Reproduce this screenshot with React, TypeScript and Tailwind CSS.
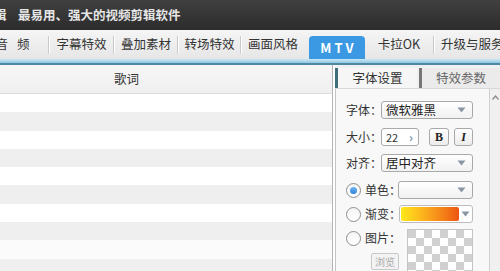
import React from "react";

const cjk = { fontFamily: '"Noto Sans CJK SC", "Noto Sans", sans-serif' };

const Sep = () => (
  <div className="flex h-[18px] w-[2px] shrink-0">
    <div className="w-px bg-[#c9c9c9]" />
    <div className="w-px bg-white" />
  </div>
);

const Arrow = () => (
  <svg width="9" height="6" viewBox="0 0 9 6" className="shrink-0">
    <path d="M0.5 0.5 L8.5 0.5 L4.5 5.5 Z" fill="#8a96a3" />
  </svg>
);

const Select = ({ text, w }: { text: string; w: string }) => (
  <div
    className={`flex h-[18px] ${w} shrink-0 items-center justify-between rounded-[3px] border border-[#a9a9a9] bg-gradient-to-b from-white to-[#f1f1f1] pl-[4px] pr-[6px] text-[12.5px] leading-none text-[#222]`}
  >
    <span className="whitespace-nowrap">{text}</span>
    <Arrow />
  </div>
);

const Radio = ({ on }: { on?: boolean }) => (
  <div className="flex h-[15px] w-[15px] shrink-0 items-center justify-center rounded-full border border-[#8e8e8e] bg-gradient-to-b from-[#f4f4f4] to-white">
    {on && <div className="h-[7px] w-[7px] rounded-full bg-gradient-to-b from-[#6fb6f2] to-[#2f82d6]" />}
  </div>
);

const rows = [
  "bg-white", "bg-[#efefef]", "bg-white", "bg-[#efefef]", "bg-white",
  "bg-[#efefef]", "bg-white", "bg-[#efefef]", "bg-[#fbfbfb]", "bg-[#efefef]",
];

export default function App() {
  return (
    <div className="flex h-[271px] w-[500px] flex-col overflow-hidden bg-white" style={cjk}>
      {/* title bar */}
      <div className="flex h-[30px] shrink-0 items-center overflow-hidden bg-gradient-to-b from-[#404040] to-[#2c2c2c] text-[12.5px] font-bold text-[#e6e6e6]">
        <span className="-ml-[6px] w-[24px] shrink-0">辑</span>
        <span className="whitespace-nowrap">最易用、强大的视频剪辑软件</span>
      </div>

      {/* toolbar */}
      <div className="relative flex h-[29px] shrink-0 items-center overflow-hidden bg-gradient-to-b from-[#f5f5f5] to-[#e6e6e6] text-[12.5px] text-[#333]">
        <div className="-ml-[14px] w-[62px] shrink-0 whitespace-nowrap text-center tracking-[9px]">音频</div>
        <Sep />
        <div className="w-[63px] shrink-0 text-center">字幕特效</div>
        <Sep />
        <div className="w-[62px] shrink-0 text-center">叠加素材</div>
        <Sep />
        <div className="w-[61px] shrink-0 text-center">转场特效</div>
        <Sep />
        <div className="w-[62px] shrink-0 text-center">画面风格</div>
        <div className="relative ml-[5px] flex h-[23px] w-[56px] shrink-0 items-center justify-center self-end rounded-t-[4px] bg-[#3b98e2] pl-[3px] text-[13px] font-bold tracking-[3px] text-white">
          MTV
          <div className="absolute -bottom-[3px] left-[26px] h-0 w-0 border-x-[3px] border-t-[3px] border-x-transparent border-t-[#3b98e2]" />
        </div>
        <div className="w-[68px] shrink-0 text-center">卡拉OK</div>
        <Sep />
        <div className="shrink-0 whitespace-nowrap pl-[6px]">升级与服务</div>
      </div>

      {/* blue divider */}
      <div className="h-[4px] shrink-0 bg-gradient-to-b from-[#cde8f4] to-[#8fc6e2]" />
      <div className="h-[2px] shrink-0 bg-[#4f88a3]" />

      {/* main */}
      <div className="flex min-h-0 flex-1">
        {/* lyric table */}
        <div className="flex w-[333px] shrink-0 flex-col border-r border-[#b4b4b4]">
          <div className="flex h-[29px] shrink-0 items-center border-b border-[#dcdcdc] bg-gradient-to-b from-[#f7f7f7] to-[#efefef] pl-[114px] text-[12.5px] text-[#333]">
            歌词
          </div>
          {rows.map((c, i) => (
            <div key={i} className={`h-[18.3px] shrink-0 ${c}`} />
          ))}
        </div>

        {/* settings panel */}
        <div className="ml-[2px] flex min-w-0 flex-1 flex-col bg-[#eef0f1]">
          <div className="mt-[3px] flex h-[20px] shrink-0 items-stretch text-[12.5px]">
            <div className="w-[3px] bg-[#3e6e78]" />
            <div className="flex w-[79px] items-center justify-center bg-[#f6f6f6] text-[#333]">字体设置</div>
            <div className="w-[2px] bg-[#eef0f1]" />
            <div className="w-[3px] bg-[#777]" />
            <div className="flex flex-1 items-center justify-center whitespace-nowrap bg-[#ebebeb] text-[#666]">特效参数</div>
          </div>

          <div className="flex min-h-0 flex-1 border-t border-[#d8d8d8]">
            <div className="flex min-w-0 flex-1 flex-col border-l border-[#c4c4c4] bg-[#f8f8f8] pl-[10px] text-[12px] text-[#333]">
              <div className="mt-[12px] flex h-[18px] items-center">
                <span className="w-[35px] shrink-0 whitespace-nowrap">字体：</span>
                <Select text="微软雅黑" w="w-[92px]" />
              </div>
              <div className="mt-[9px] flex h-[18px] items-center">
                <span className="w-[35px] shrink-0 whitespace-nowrap">大小：</span>
                <div className="flex h-[18px] w-[38px] shrink-0 items-center justify-between rounded-[3px] border border-[#a9a9a9] bg-white pl-[4px] pr-[5px] text-[11px] leading-none">
                  <span>22</span>
                  <span className="text-[12px] font-bold text-[#6b8fb2]">›</span>
                </div>
                <div className="ml-[10px] flex h-[18px] w-[20px] shrink-0 items-center justify-center rounded-[3px] border border-[#a9a9a9] bg-gradient-to-b from-white to-[#ececec] text-[12px] font-bold text-[#222]" style={{ fontFamily: '"Liberation Serif", serif' }}>
                  B
                </div>
                <div className="ml-[5px] flex h-[18px] w-[19px] shrink-0 items-center justify-center rounded-[3px] border border-[#a9a9a9] bg-gradient-to-b from-white to-[#ececec] text-[12px] font-bold italic text-[#222]" style={{ fontFamily: '"Liberation Serif", serif' }}>
                  I
                </div>
              </div>
              <div className="mt-[8px] flex h-[18px] items-center">
                <span className="w-[35px] shrink-0 whitespace-nowrap">对齐：</span>
                <Select text="居中对齐" w="w-[92px]" />
              </div>
              <div className="mt-[9px] flex h-[18px] items-center">
                <Radio on />
                <span className="ml-[4px] w-[33px] shrink-0 whitespace-nowrap">单色：</span>
                <Select text="" w="w-[75px]" />
              </div>
              <div className="mt-[6px] flex h-[18px] items-center">
                <Radio />
                <span className="ml-[4px] w-[34px] shrink-0 whitespace-nowrap">渐变：</span>
                <div className="flex h-[18px] w-[74px] shrink-0 items-center rounded-[3px] border border-[#bdbdbd] bg-white p-[1px]">
                  <div className="h-full w-[58px] rounded-[2px] bg-gradient-to-r from-[#ffe81a] via-[#f9a11c] to-[#ec5412]" />
                  <div className="flex flex-1 justify-center">
                    <Arrow />
                  </div>
                </div>
              </div>
              <div className="mt-[6px] flex items-start">
                <div className="flex w-[61px] shrink-0 flex-col">
                  <div className="flex h-[18px] items-center">
                    <Radio />
                    <span className="ml-[4px] whitespace-nowrap">图片：</span>
                  </div>
                  <div className="ml-[25px] mt-[6px] flex h-[17px] w-[28px] items-center justify-center rounded-[2px] border border-[#c8c8c8] bg-[#f3f3f3] text-[10px] text-[#aaa]">
                    浏览
                  </div>
                </div>
                <div className="grid h-[60px] w-[66px] shrink-0 grid-cols-8 overflow-hidden border border-[#c4c4c4] bg-white">
                  {Array.from({ length: 64 }).map((_, i) => (
                    <div
                      key={i}
                      className={`h-[8px] ${(Math.floor(i / 8) + i) % 2 === 0 ? "bg-[#d0d0d0]" : "bg-white"}`}
                    />
                  ))}
                </div>
              </div>
            </div>
            {/* scrollbar */}
            <div className="flex w-[11px] shrink-0 flex-col items-center border-l border-[#d0d0d0] bg-[#f0f0f0] pt-[6px]">
              <svg width="7" height="5" viewBox="0 0 7 5">
                <path d="M0.5 4.5 L3.5 1 L6.5 4.5" fill="none" stroke="#888" strokeWidth="1.2" />
              </svg>
            </div>
          </div>
        </div>
      </div>
    </div>
  );
}
